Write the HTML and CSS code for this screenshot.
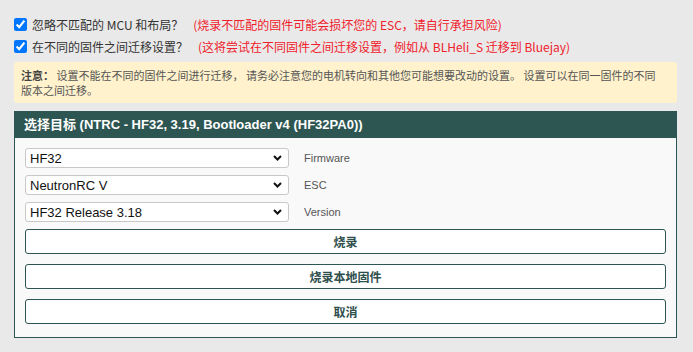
FILE: index.html
```html
<!DOCTYPE html>
<html lang="zh-CN">
<head>
    <meta charset="UTF-8">
    <meta name="viewport" content="width=device-width, initial-scale=1.0">
    <title>固件烧录</title>
    <link rel="stylesheet" href="styles.css">
</head>
<body>

<div class="page">
    <label class="check-row">
        <input type="checkbox" checked>
        <span>忽略不匹配的 MCU 和布局？</span>
        <span class="warn">(烧录不匹配的固件可能会损坏您的 ESC，请自行承担风险)</span>
    </label>
    <label class="check-row">
        <input type="checkbox" checked>
        <span>在不同的固件之间迁移设置？</span>
        <span class="warn">(这将尝试在不同固件之间迁移设置，例如从 BLHeli_S 迁移到 Bluejay)</span>
    </label>

    <div class="note">
        <strong>注意：</strong> 设置不能在不同的固件之间进行迁移， 请务必注意您的电机转向和其他您可能想要改动的设置。 设置可以在同一固件的不同版本之间迁移。
    </div>

    <div class="panel">
        <div class="panel-header">选择目标 (NTRC - HF32, 3.19, Bootloader v4 (HF32PA0))</div>
        <div class="panel-body">
            <div class="field">
                <select>
                    <option>HF32</option>
                </select>
                <span class="field-label">Firmware</span>
            </div>
            <div class="field">
                <select>
                    <option>NeutronRC V</option>
                </select>
                <span class="field-label">ESC</span>
            </div>
            <div class="field">
                <select>
                    <option>HF32 Release 3.18</option>
                </select>
                <span class="field-label">Version</span>
            </div>

            <div class="buttons">
                <button type="button">烧录</button>
                <button type="button">烧录本地固件</button>
                <button type="button">取消</button>
            </div>
        </div>
    </div>
</div>

</body>
</html>
```

FILE: styles.css
```css
body {
    font-family: "Noto Sans CJK SC", "Liberation Sans", sans-serif;
    margin: 0;
    padding: 0;
    background-color: #e9e9e9;
    color: #333;
}

.page {
    padding: 13px 16px 0 14px;
}

.check-row {
    display: flex;
    align-items: center;
    height: 22px;
    font-size: 12px;
}

.check-row input {
    width: 13px;
    height: 13px;
    margin: 0 5px 0 0;
}

.warn {
    color: #f0202c;
    margin-left: 10px;
}

.note {
    margin-top: 5px;
    background-color: #fff2cc;
    border-radius: 3px;
    padding: 6px 18px 5px 7px;
    font-size: 11px;
    line-height: 15px;
    color: #555;
}

.note strong {
    color: #444;
}

.panel {
    margin-top: 8px;
    border: 1px solid #2d5652;
    background-color: #f9f9f9;
}

.panel-header {
    background-color: #2d5652;
    color: #fff;
    font-family: "Liberation Sans", "Noto Sans CJK SC", sans-serif;
    font-weight: bold;
    font-size: 13px;
    height: 27px;
    line-height: 27px;
    padding-left: 10px;
    margin: -1px -1px 0;
}

.panel-body {
    padding: 10px 10px 13px;
}

.field {
    display: flex;
    align-items: center;
    margin-bottom: 7px;
}

.field select {
    appearance: none;
    width: 264px;
    height: 20px;
    padding: 0 0 0 4px;
    border: 1px solid #c8c8c8;
    border-radius: 3px;
    background-color: #fff;
    background-image: url("data:image/svg+xml,%3Csvg xmlns='http://www.w3.org/2000/svg' width='9' height='6' viewBox='0 0 9 6'%3E%3Cpath d='M1 1l3.5 3.5L8 1' fill='none' stroke='%23111' stroke-width='2'/%3E%3C/svg%3E");
    background-repeat: no-repeat;
    background-position: right 6px center;
    font-family: "Liberation Sans", sans-serif;
    font-size: 13px;
    color: #111;
}

.field-label {
    margin-left: 15px;
    font-family: "Liberation Sans", sans-serif;
    font-size: 11px;
    color: #555;
}

.buttons {
    display: flex;
    flex-direction: column;
    gap: 10px;
    margin-top: 7px;
}

.buttons button {
    height: 25px;
    background-color: #fff;
    border: 1px solid #2d5652;
    border-radius: 3px;
    font-family: "Noto Sans CJK SC", sans-serif;
    font-size: 12px;
    font-weight: bold;
    color: #2f4f4d;
    cursor: pointer;
}

.buttons button:hover {
    background-color: #eef3f2;
}
```
